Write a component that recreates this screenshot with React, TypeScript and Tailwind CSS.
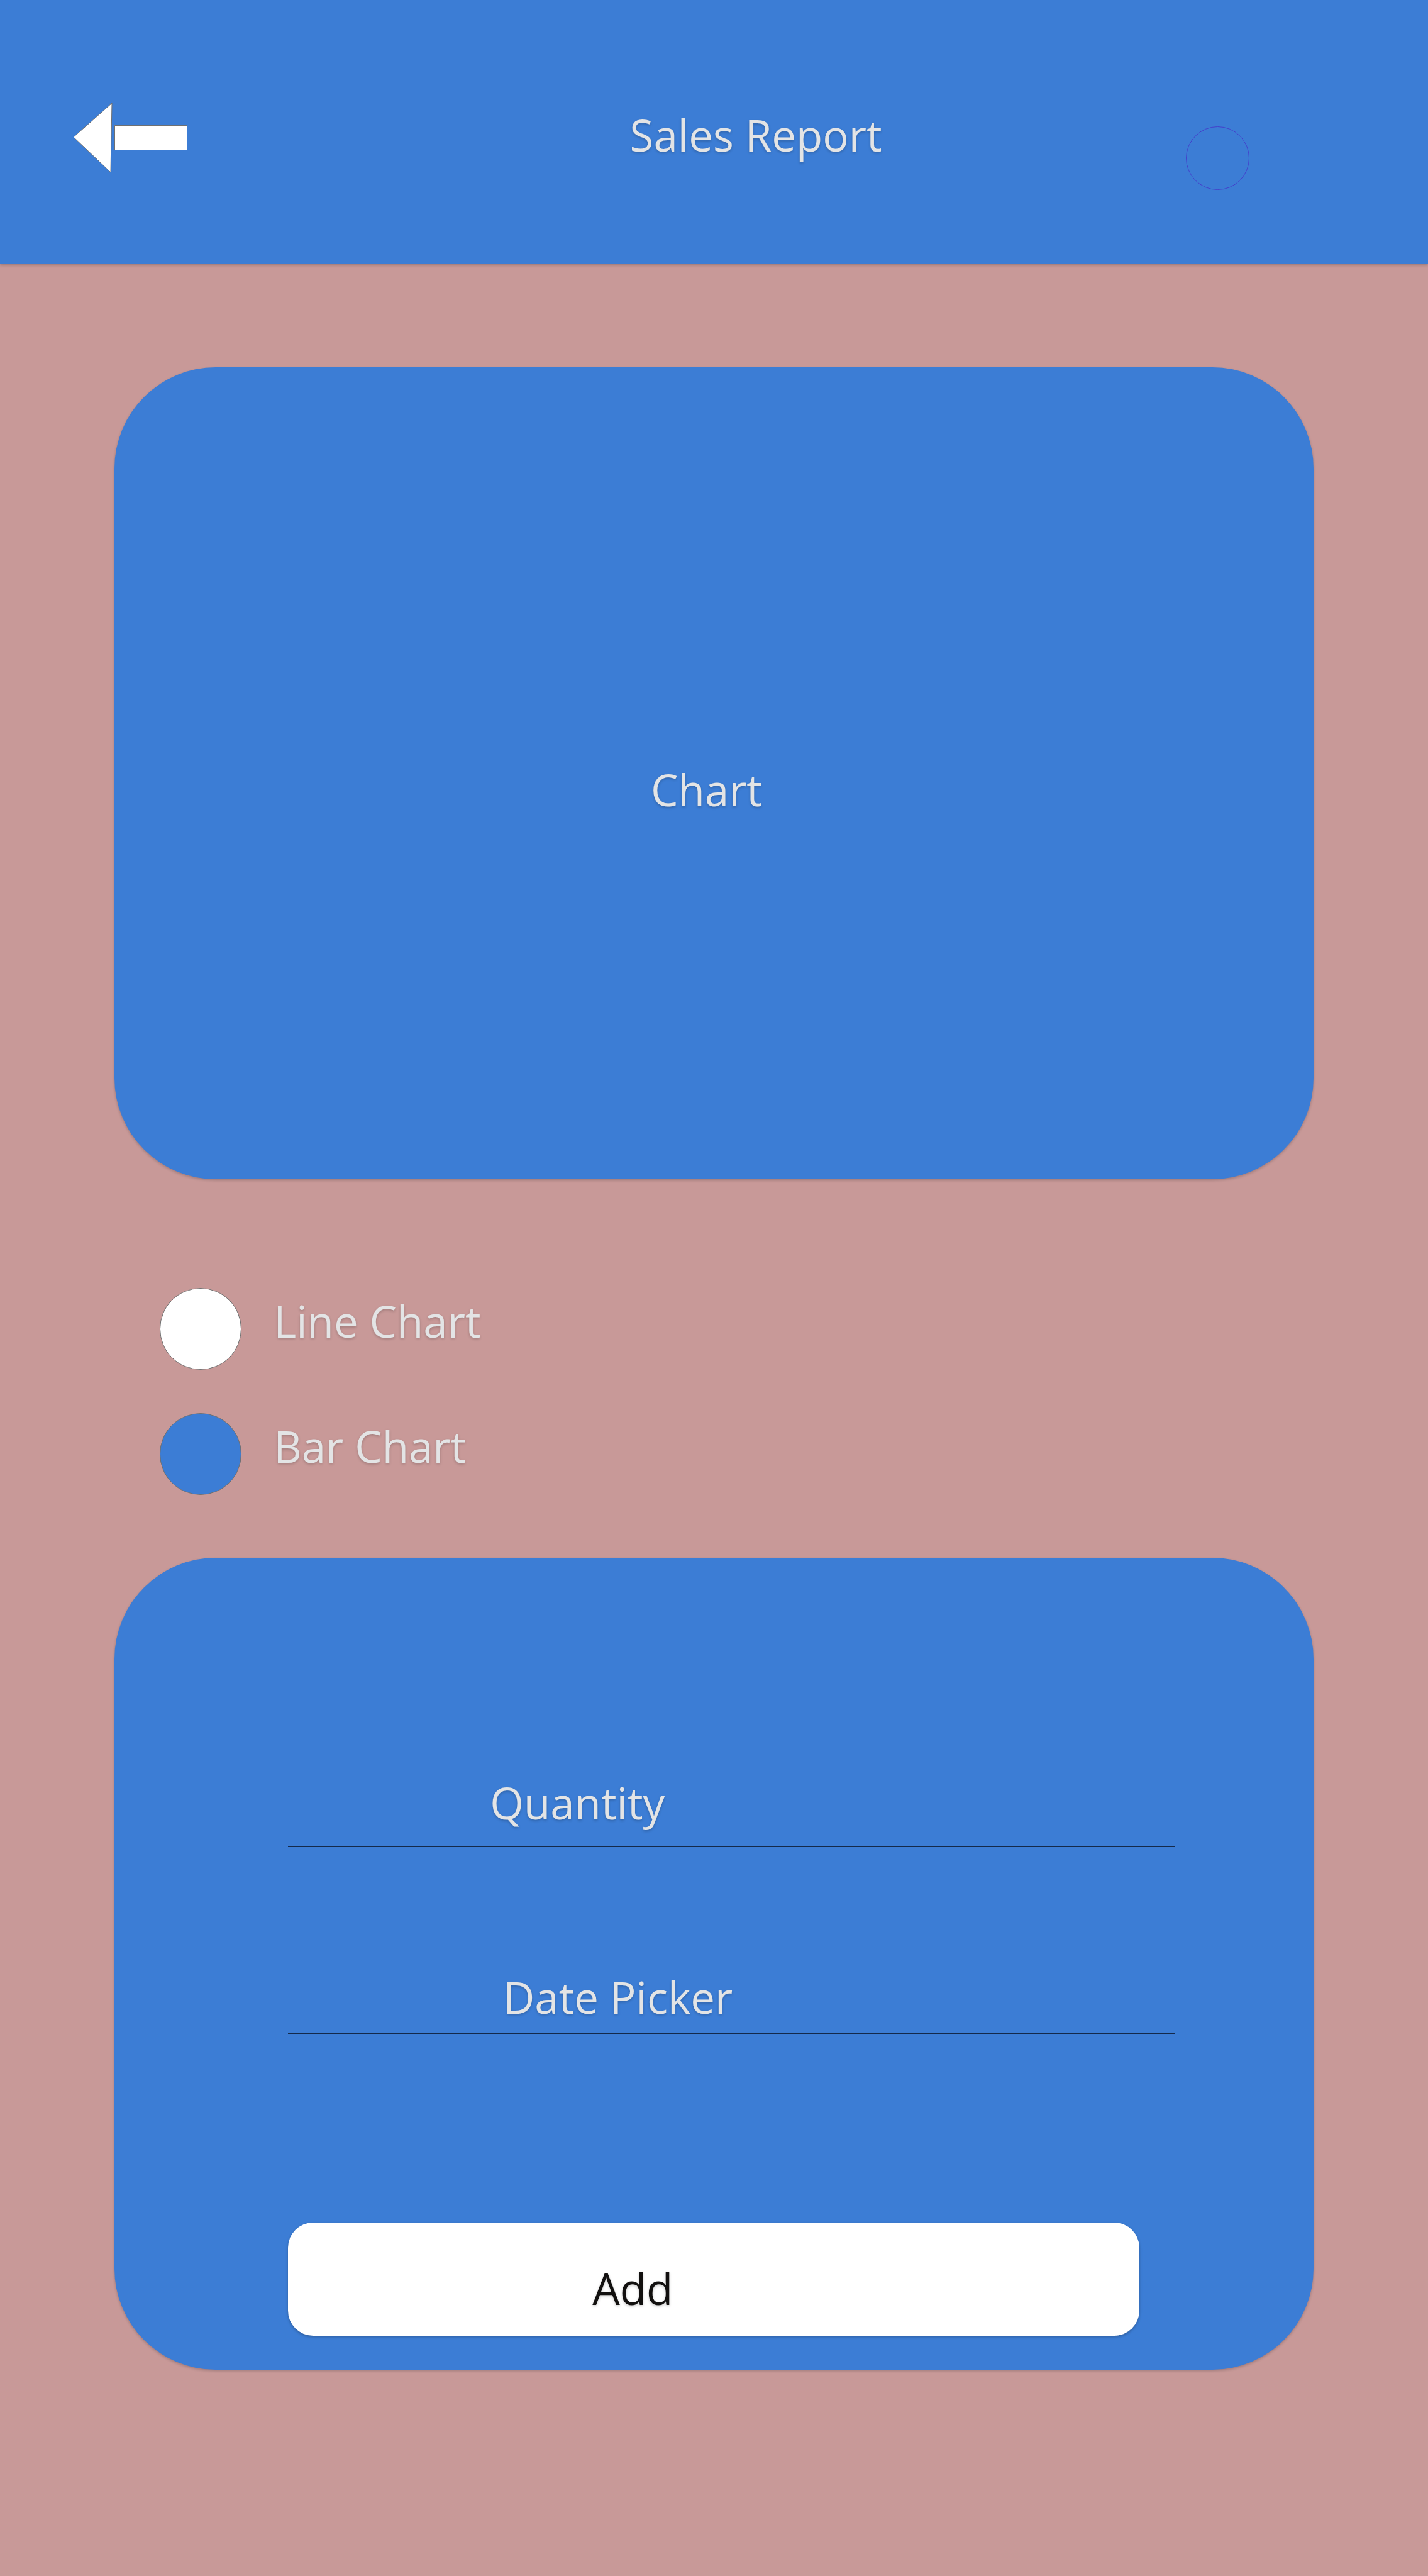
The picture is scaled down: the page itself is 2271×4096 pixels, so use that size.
import React, { useState } from "react";

const textShadow = "[text-shadow:0_2px_4px_rgba(0,0,0,0.2)]";

function BackButton() {
  return (
    <button type="button" aria-label="Back" className="ml-[5.1%] shrink-0 cursor-pointer">
      <svg width="184" height="114" viewBox="0 0 184 114" fill="#fff" stroke="#707070" strokeWidth="1">
        <path d="M1 56 L62 2 L60 112 Z" />
        <path d="M66.5 37.5 H181.5 V76.5 H66.5 Z" />
      </svg>
    </button>
  );
}

function ChartOption({
  label,
  value,
  selected,
  onSelect,
}: {
  label: string;
  value: string;
  selected: string;
  onSelect: (value: string) => void;
}) {
  return (
    <label className={`flex cursor-pointer items-start gap-[51px] text-[#e3e4e5] ${textShadow}`}>
      <input
        type="radio"
        name="chart-type"
        value={value}
        checked={selected === value}
        onChange={() => onSelect(value)}
        className="size-[130px] shrink-0 appearance-none rounded-full border border-[#707070] bg-[#3c7dd5] checked:bg-white"
      />
      {label}
    </label>
  );
}

function Field({ id, label, className }: { id: string; label: string; className: string }) {
  return (
    <div className={`grid w-[86.4%] border-b border-[#14294a] ${className}`}>
      <label htmlFor={id} className={`text-[#e3e4e5] [grid-area:1/1] ${textShadow}`}>
        {label}
      </label>
      <input id={id} type="text" className="w-full bg-transparent text-white outline-none [grid-area:1/1]" />
    </div>
  );
}

export default function App() {
  const [chartType, setChartType] = useState("line");

  return (
    <div className="min-h-screen bg-[#c89998] font-['Open_Sans','Noto_Sans',sans-serif] text-[69px] leading-[104px]">
      <header className="flex h-[420px] items-start bg-[#3c7dd5] pt-[162px] shadow-[0_2px_4px_rgba(0,0,0,0.2)]">
        <BackButton />
        <h1 className={`ml-[30.9%] whitespace-nowrap text-[#e3e4e5] ${textShadow}`}>Sales Report</h1>
        <span className="mt-[39px] mr-[12.5%] ml-auto size-[101px] shrink-0 rounded-full border border-[#443fcb]" />
      </header>

      <main className="px-[8%] pt-[164px] pb-[164px]">
        <section className="h-[1291px] rounded-[161px] bg-[#3c7dd5] pt-[619px] pr-[24px] text-center shadow-[0_2px_4px_rgba(0,0,0,0.2)]">
          <h2 className={`text-[#e3e4e5] ${textShadow}`}>Chart</h2>
        </section>

        <fieldset aria-label="Chart type" className="mt-[173px] flex flex-col items-start gap-[69px] pl-[3.8%]">
          <ChartOption label="Line Chart" value="line" selected={chartType} onSelect={setChartType} />
          <ChartOption label="Bar Chart" value="bar" selected={chartType} onSelect={setChartType} />
        </fieldset>

        <form
          onSubmit={(e) => e.preventDefault()}
          className="mt-[100px] rounded-[161px] bg-[#3c7dd5] pt-[337px] pb-[54px] pl-[14.5%] shadow-[0_2px_4px_rgba(0,0,0,0.2)]"
        >
          <Field id="quantity" label="Quantity" className="pb-[18px] pl-[321px]" />
          <Field id="date" label="Date Picker" className="mt-[186px] pb-[6px] pl-[342px]" />
          <button
            type="submit"
            className={`mt-[300px] block h-[180px] w-[83%] cursor-pointer rounded-[40px] bg-white pt-[28px] pr-[258px] text-center text-[#12100f] shadow-[0_2px_4px_rgba(0,0,0,0.25)] ${textShadow}`}
          >
            Add
          </button>
        </form>
      </main>
    </div>
  );
}
